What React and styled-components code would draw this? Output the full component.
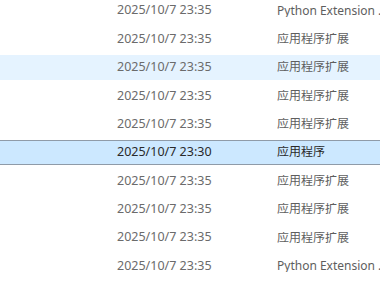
import React from 'react'
import styled, { createGlobalStyle } from 'styled-components'

const GlobalStyle = createGlobalStyle`
  html, body {
    margin: 0;
    padding: 0;
    background: #ffffff;
    overflow: hidden;
  }
  body {
    font-family: 'Noto Sans', 'Noto Sans CJK SC', sans-serif;
  }
`

const List = styled.div`
  width: 380px;
  height: 282px;
  overflow: hidden;
  margin-top: -3.5px;
`

const Row = styled.div`
  height: 28.37px;
  display: flex;
  align-items: center;
`

const Band = styled.div`
  flex: 1;
  height: 24.5px;
  box-sizing: border-box;
  display: grid;
  grid-template-columns: 160px 112px;
  align-items: center;
  padding-left: 117px;
  background: ${(p) => (p.$selected ? '#cce8ff' : p.$hover ? '#e5f3ff' : 'transparent')};
  border-top: 1px solid ${(p) => (p.$selected ? '#8f9ba8' : 'transparent')};
  border-bottom: 1px solid ${(p) => (p.$selected ? '#8f9ba8' : 'transparent')};
  white-space: nowrap;
`

const DateCell = styled.span`
  font-size: 12.5px;
  line-height: 1;
  color: ${(p) => (p.$selected ? '#2a2a2a' : '#6b6b6b')};
`

const TypeCell = styled.span`
  font-size: 12px;
  line-height: 1;
  overflow: hidden;
  text-overflow: ellipsis;
  color: ${(p) => (p.$selected ? '#2a2a2a' : '#5e5e5e')};
`

const rows = [
  { date: '2025/10/7 23:35', type: 'Python Extension Module' },
  { date: '2025/10/7 23:35', type: '应用程序扩展' },
  { date: '2025/10/7 23:35', type: '应用程序扩展', hover: true },
  { date: '2025/10/7 23:35', type: '应用程序扩展' },
  { date: '2025/10/7 23:35', type: '应用程序扩展' },
  { date: '2025/10/7 23:30', type: '应用程序', selected: true },
  { date: '2025/10/7 23:35', type: '应用程序扩展' },
  { date: '2025/10/7 23:35', type: '应用程序扩展' },
  { date: '2025/10/7 23:35', type: '应用程序扩展' },
  { date: '2025/10/7 23:35', type: 'Python Extension Module' },
]

function App() {
  return (
    <>
      <GlobalStyle />
      <List>
        {rows.map((r, i) => (
          <Row key={i}>
            <Band $hover={r.hover} $selected={r.selected}>
              <DateCell $selected={r.selected}>{r.date}</DateCell>
              <TypeCell $selected={r.selected}>{r.type}</TypeCell>
            </Band>
          </Row>
        ))}
      </List>
    </>
  )
}

export default App
